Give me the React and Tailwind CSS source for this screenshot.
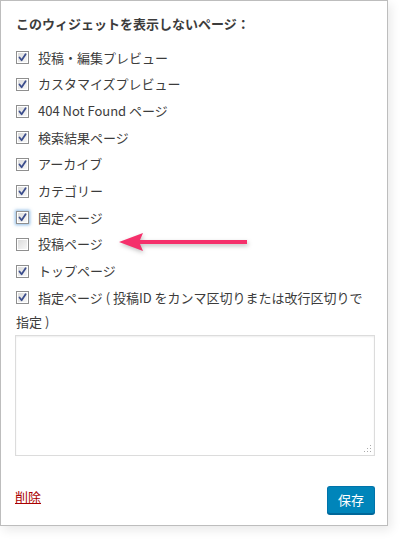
const items = [
  { label: "投稿・編集プレビュー", checked: true },
  { label: "カスタマイズプレビュー", checked: true },
  { label: "404 Not Found ページ", checked: true },
  { label: "検索結果ページ", checked: true },
  { label: "アーカイブ", checked: true },
  { label: "カテゴリー", checked: true },
  { label: "固定ページ", checked: true, focused: true },
  { label: "投稿ページ", checked: false },
  { label: "トップページ", checked: true },
];

function Checkbox({ checked, focused }) {
  return (
    <span
      className={
        "relative inline-block w-[13px] h-[13px] border border-[#8f8f8f] bg-white align-middle shrink-0 " +
        (focused ? "shadow-[0_0_3px_1px_rgba(91,157,217,0.7)]" : "")
      }
    >
      <span className="absolute inset-[1px] bg-gradient-to-br from-[#dcdcdc] to-[#f7f7f7]" />
      {checked && (
        <svg
          viewBox="0 0 11 11"
          className="absolute left-0 top-0 w-[11px] h-[11px]"
        >
          <path
            d="M2.5 5.5 L4.6 8.2 L8.6 2.2"
            fill="none"
            stroke="#3b4d8c"
            strokeWidth="1.8"
            strokeLinecap="round"
            strokeLinejoin="round"
          />
        </svg>
      )}
    </span>
  );
}

export default function App() {
  return (
    <div className="w-[403px] h-[541px] bg-white font-['Noto_Sans_CJK_JP','Noto_Sans',sans-serif] text-[13px] text-[#3c3c3c]">
      <div className="relative w-[388px] h-[526px] border border-[#bdbdbd] bg-white shadow-[3px_4px_10px_rgba(0,0,0,0.09)] px-[14px] pt-[13px]">
        <div className="font-bold leading-[20px] pl-[1px]">
          このウィジェットを表示しないページ：
        </div>

        {/* Checkboxes */}
        <div className="mt-[10.5px] pl-[1px]">
          {items.map((it) => (
            <label
              key={it.label}
              className="flex items-center h-[26.67px] gap-[9px]"
            >
              <Checkbox checked={it.checked} focused={it.focused} />
              <span className="leading-[20px]">{it.label}</span>
            </label>
          ))}
          <div className="leading-[24px]">
            <Checkbox checked />
            <span className="ml-[9px] align-middle">
              指定ページ ( 投稿ID をカンマ区切りまたは改行区切りで
            </span>
            <br />
            <span>指定 )</span>
          </div>
        </div>

        <div className="relative mt-[1px] w-[360px] h-[121px] border border-[#dcdcdc] shadow-[inset_0_1px_2px_rgba(0,0,0,0.07)]">
          <svg
            viewBox="0 0 8 8"
            className="absolute right-[2px] bottom-[2px] w-[8px] h-[8px]"
          >
            <rect x="6" y="0" width="1" height="1" fill="#aaa" />
            <rect x="3" y="3" width="1" height="1" fill="#aaa" />
            <rect x="6" y="3" width="1" height="1" fill="#aaa" />
            <rect x="0" y="6" width="1" height="1" fill="#aaa" />
            <rect x="3" y="6" width="1" height="1" fill="#aaa" />
            <rect x="6" y="6" width="1" height="1" fill="#aaa" />
          </svg>
        </div>

        <div className="flex justify-between items-start mt-[30px] w-[360px]">
          <a className="mt-[1px] leading-[20px] text-[#a00] underline">削除</a>
          <button className="w-[48px] h-[28px] rounded-[3px] bg-[#0085ba] border border-[#0073aa] border-b-[#006799] text-white text-[13px] leading-[26px] shadow-[0_1px_0_#006799]">
            保存
          </button>
        </div>

        {/* Arrow pointing to 投稿ページ */}
        <svg
          viewBox="0 0 134 24"
          className="absolute left-[115px] top-[229px] w-[134px] h-[24px] drop-shadow-[1px_2px_2px_rgba(0,0,0,0.25)]"
        >
          <path d="M3 12 L27 3 L24 10 L131 10 L131 14 L24 14 L27 21 Z" fill="#f5306b" />
        </svg>
      </div>
    </div>
  );
}
